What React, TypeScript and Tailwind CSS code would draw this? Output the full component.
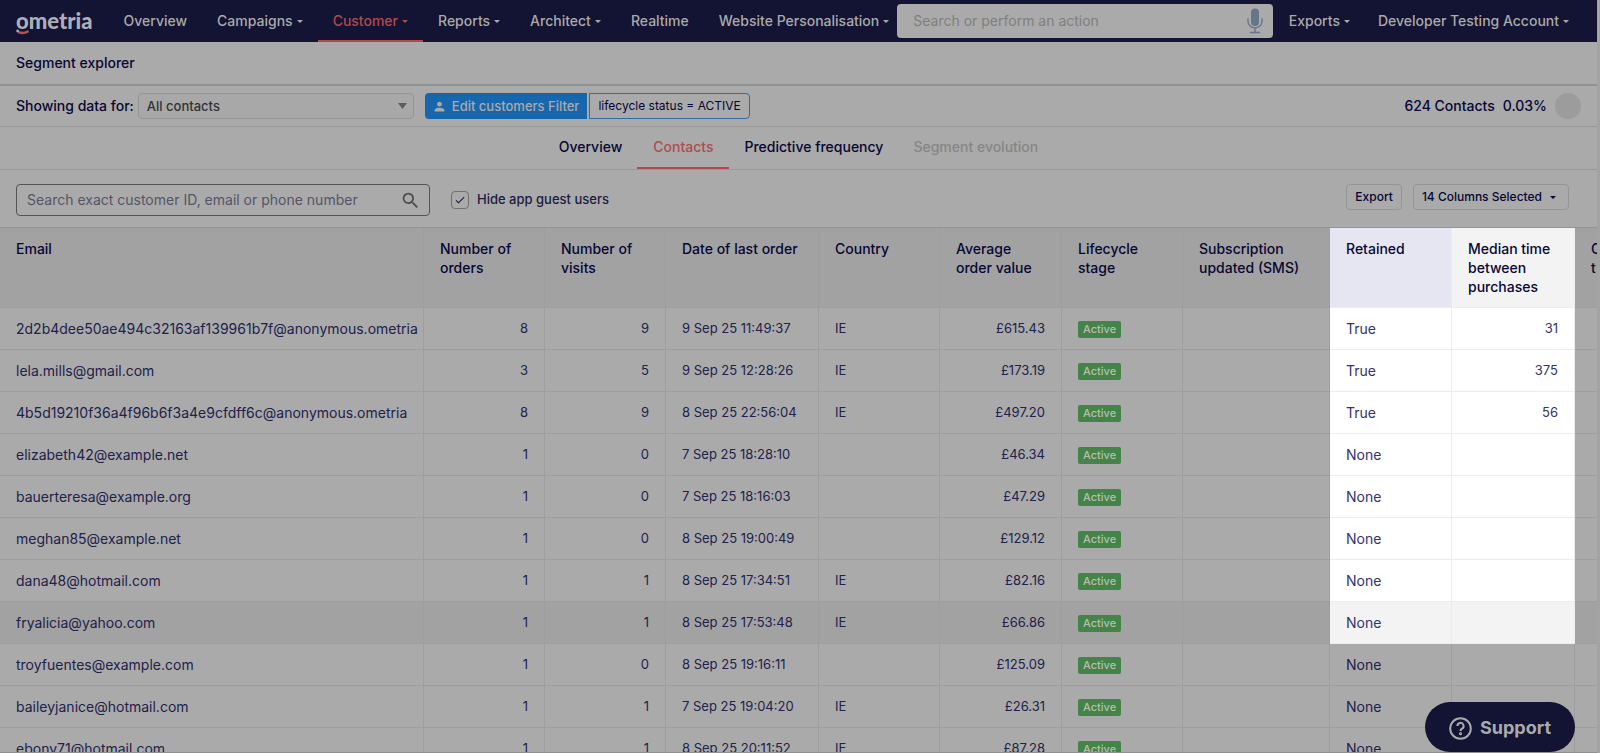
import React, { useState } from 'react'
import { IoMdPerson } from 'react-icons/io'
import { MdSearch, MdCheck } from 'react-icons/md'

type NavItem = {
  label: string;
  caret?: boolean;
  active?: boolean;
};

type Contact = {
  email: string;
  orders: number;
  visits: number;
  date: string;
  country: string;
  value: string;
  retained: string;
  median: string;
};

const navItems: NavItem[] = [
  { label: 'Overview' },
  { label: 'Campaigns', caret: true },
  { label: 'Customer', caret: true, active: true },
  { label: 'Reports', caret: true },
  { label: 'Architect', caret: true },
  { label: 'Realtime' },
  { label: 'Website Personalisation', caret: true },
]

const contacts: Contact[] = [
  { email: '2d2b4dee50ae494c32163af139961b7f@anonymous.ometria', orders: 8, visits: 9, date: '9 Sep 25 11:49:37', country: 'IE', value: '£615.43', retained: 'True', median: '31' },
  { email: 'lela.mills@gmail.com', orders: 3, visits: 5, date: '9 Sep 25 12:28:26', country: 'IE', value: '£173.19', retained: 'True', median: '375' },
  { email: '4b5d19210f36a4f96b6f3a4e9cfdff6c@anonymous.ometria', orders: 8, visits: 9, date: '8 Sep 25 22:56:04', country: 'IE', value: '£497.20', retained: 'True', median: '56' },
  { email: 'elizabeth42@example.net', orders: 1, visits: 0, date: '7 Sep 25 18:28:10', country: '', value: '£46.34', retained: 'None', median: '' },
  { email: 'bauerteresa@example.org', orders: 1, visits: 0, date: '7 Sep 25 18:16:03', country: '', value: '£47.29', retained: 'None', median: '' },
  { email: 'meghan85@example.net', orders: 1, visits: 0, date: '8 Sep 25 19:00:49', country: '', value: '£129.12', retained: 'None', median: '' },
  { email: 'dana48@hotmail.com', orders: 1, visits: 1, date: '8 Sep 25 17:34:51', country: 'IE', value: '£82.16', retained: 'None', median: '' },
  { email: 'fryalicia@yahoo.com', orders: 1, visits: 1, date: '8 Sep 25 17:53:48', country: 'IE', value: '£66.86', retained: 'None', median: '' },
  { email: 'troyfuentes@example.com', orders: 1, visits: 0, date: '8 Sep 25 19:16:11', country: '', value: '£125.09', retained: 'None', median: '' },
  { email: 'baileyjanice@hotmail.com', orders: 1, visits: 1, date: '7 Sep 25 19:04:20', country: 'IE', value: '£26.31', retained: 'None', median: '' },
  { email: 'ebony71@hotmail.com', orders: 1, visits: 1, date: '8 Sep 25 20:11:52', country: 'IE', value: '£87.28', retained: 'None', median: '' },
]

// rows inside the spotlight, and the row under the pointer
const SPOTLIGHT_ROWS = 8
const HOVERED_ROW = 7

const Caret = () => (
  <svg width="6" height="3" viewBox="0 0 6 3" className="shrink-0" aria-hidden="true">
    <path d="M0 0h6L3 3z" fill="currentColor" />
  </svg>
)

const Logo = () => (
  <a href="#home" className="relative block shrink-0 font-['Lato',sans-serif] text-[22px] leading-6 font-black text-[#aeaeb6]">
    ometria
    <svg width="14" height="6" viewBox="0 0 14 6" className="absolute left-0 top-5" aria-hidden="true">
      <path d="M3 3.2C6 4.4 9 4 11.6 2.6" stroke="#b84f55" strokeWidth="2.6" fill="none" strokeLinecap="round" />
      <circle cx="1.6" cy="2" r="1.4" fill="#aaaaaa" />
    </svg>
  </a>
)

const MicIcon = () => (
  <svg width="16" height="26" viewBox="0 0 16 26" aria-hidden="true">
    <rect x="4" y="0.5" width="8" height="17.5" rx="4" fill="#66768a" />
    <path d="M1 11v2.5a7 6.5 0 0 0 14 0V11M8 20v4.5M3.5 24.5h9" stroke="#66768a" strokeWidth="1.4" fill="none" strokeLinecap="round" />
  </svg>
)

const TopNav = () => (
  <nav className="flex h-[42px] items-center bg-[#131333] pl-4 text-sm font-medium text-[#aaaaaa]">
    <Logo />
    <div className="ml-4 flex h-full">
      {navItems.map(item => (
        <a
          key={item.label}
          href={'#' + item.label.toLowerCase().replace(' ', '-')}
          className={`flex items-center gap-1 whitespace-nowrap px-[15px] pt-0.5 border-b-2 last:pr-2 ${item.active ? 'border-[#b04a4f] text-[#b04a4f]' : 'border-transparent'}`}
        >
          {item.label}
          {item.caret && <Caret />}
        </a>
      ))}
    </div>
    <div className="flex h-[34px] min-w-0 flex-1 items-center rounded-sm bg-[#aaaaaa] pl-4 pr-2.5">
      <input
        type="text"
        aria-label="Search or perform an action"
        placeholder="Search or perform an action"
        className="min-w-0 flex-1 bg-transparent text-sm font-normal text-[#070741] outline-none placeholder:text-[#808080]"
      />
      <button aria-label="Voice search"><MicIcon /></button>
    </div>
    <a href="#exports" className="ml-4 flex items-center gap-1 whitespace-nowrap">Exports <Caret /></a>
    <a href="#account" className="mx-7 flex items-center gap-1 whitespace-nowrap">Developer Testing Account <Caret /></a>
  </nav>
)

const FilterBar = () => (
  <div className="flex h-[41px] items-center border-b border-[#989898] px-4 text-sm font-medium">
    <label htmlFor="segment">Showing data for:</label>
    <div className="relative ml-1 w-[276px]">
      <select id="segment" className="h-[26px] w-full appearance-none rounded-sm border border-[#959595] bg-[#a8a8a8] px-2 text-[13px] text-[#333333]">
        <option>All contacts</option>
      </select>
      <svg width="9" height="6" viewBox="0 0 9 6" className="pointer-events-none absolute right-[7px] top-2.5" aria-hidden="true">
        <path d="M0 0h9L4.5 6z" fill="#5c5c5c" />
      </svg>
    </div>
    <button className="ml-[11px] flex h-[26px] items-center gap-1.5 rounded-l-sm bg-[#1867ad] px-2 text-[13px] font-medium text-[#aaaaaa]">
      <IoMdPerson size={13} /> Edit customers Filter
    </button>
    <button className="ml-0.5 h-[26px] rounded-r-sm border border-[#2a6cad] px-2 text-xs font-normal">lifecycle status = ACTIVE</button>
    <span className="ml-auto">624 Contacts</span>
    <span className="ml-2">0.03%</span>
    <span className="ml-2 size-[26px] rounded-full bg-[#9c9c9c]" />
  </div>
)

const Tabs = () => (
  <div className="flex h-[43px] justify-center border-b border-[#989898] text-sm font-medium">
    <button className="px-[15px] pb-0.5">Overview</button>
    <button className="border-b-2 border-[#b04a4f] px-4 text-[#b04a4f]">Contacts</button>
    <button className="px-[15px] pb-0.5">Predictive frequency</button>
    <button className="px-[15px] pb-0.5 text-[#868686]" disabled>Segment evolution</button>
  </div>
)

const Toolbar = () => {
  const [hideGuests, setHideGuests] = useState(true)

  return (
    <div className="flex h-[58px] items-start border-b border-[#959595] pt-3.5 pl-4 pr-7 text-xs font-medium">
      <div className="flex h-8 w-[414px] items-center rounded-sm border border-[#555555] pl-2.5 pr-2">
        <input
          type="text"
          aria-label="Search exact customer ID, email or phone number"
          placeholder="Search exact customer ID, email or phone number"
          className="min-w-0 flex-1 bg-transparent text-sm font-normal text-[#070741] outline-none placeholder:text-[#555568]"
        />
        <MdSearch size={21} className="text-[#4c4c4c]" />
      </div>
      <label className="relative ml-[21px] flex h-8 items-center gap-2 text-[13px] text-[#1b1b42]">
        <input
          type="checkbox"
          checked={hideGuests}
          onChange={e => setHideGuests(e.target.checked)}
          className="size-[18px] appearance-none rounded-sm border border-[#707070]"
        />
        {hideGuests && <MdCheck size={12} className="pointer-events-none absolute left-[3px]" />}
        Hide app guest users
      </label>
      <button className="ml-auto h-[26px] rounded-sm border border-[#959595] px-2">Export</button>
      <button className="ml-[11px] flex h-[26px] items-center gap-2 rounded-sm border border-[#959595] pl-2 pr-3">
        14 Columns Selected <Caret />
      </button>
    </div>
  )
}

const ContactsTable = () => {
  const head = 'border-r border-b px-4 py-[11px] align-top text-left font-medium'
  const th = `${head} border-[#9e9e9e] bg-[#a2a2a2]`
  const td = 'h-[42px] border-r border-b border-[#9e9e9e] px-4 py-0 whitespace-nowrap'

  return (
    <table className="w-full table-fixed border-separate border-spacing-0 text-[13px] leading-[19px]">
      <colgroup>
        <col />
        <col className="w-[121px]" />
        <col className="w-[121px]" />
        <col className="w-[153px]" />
        <col className="w-[121px]" />
        <col className="w-[122px]" />
        <col className="w-[121px]" />
        <col className="w-[147px]" />
        <col className="w-[122px]" />
        <col className="w-[123px]" />
        <col className="w-[22px]" />
      </colgroup>
      <thead className="text-sm leading-[19px]">
        <tr className="h-20">
          <th className={th}>Email</th>
          <th className={th}>Number of orders</th>
          <th className={th}>Number of visits</th>
          <th className={`${th} whitespace-nowrap`}>Date of last order</th>
          <th className={th}>Country</th>
          <th className={th}>Average order value</th>
          <th className={th}>Lifecycle stage</th>
          <th className={th}>Subscription updated (SMS)</th>
          <th className={`${head} border-[#ececf0] bg-[#e6e6f3]`}>Retained</th>
          <th className={`${head} border-[#ececec] bg-[#f3f3f3]`}>Median time between purchases</th>
          <th className="overflow-hidden border-b border-[#9e9e9e] bg-[#a2a2a2] py-[11px] pl-4 text-left align-top font-medium">C<br />t</th>
        </tr>
      </thead>
      <tbody className="text-[#21214b]">
        {contacts.map((c, idx) => {
          const lit = idx < SPOTLIGHT_ROWS
          const hovered = idx === HOVERED_ROW
          const litBg = hovered ? 'bg-[#f3f3f3]' : 'bg-white'
          const litCell = `h-[42px] border-r border-b px-4 py-0 ${lit ? `border-[#ececec] text-[#33336a] ${litBg}` : 'border-[#9e9e9e]'}`
          return (
            <tr key={c.email} className={hovered ? 'bg-[#a2a2a2]' : ''}>
              <td className="h-[42px] border-r border-b border-[#9e9e9e] py-0 pl-4 text-sm whitespace-nowrap">{c.email}</td>
              <td className={`${td} text-right`}>{c.orders}</td>
              <td className={`${td} text-right`}>{c.visits}</td>
              <td className={td}>{c.date}</td>
              <td className={td}>{c.country}</td>
              <td className={`${td} text-right`}>{c.value}</td>
              <td className={td}>
                <span className="inline-block rounded-xs bg-[#448448] px-[5px] text-[11px] leading-[17px] font-medium text-[#b4bfb4]">Active</span>
              </td>
              <td className={td} />
              <td className={`${litCell} text-sm`}>{c.retained}</td>
              <td className={`${litCell} text-right`}>{c.median}</td>
              <td className="border-b border-[#9e9e9e]" />
            </tr>
          )
        })}
      </tbody>
    </table>
  )
}

const SupportButton = () => (
  <button className="fixed right-[25px] bottom-px flex h-[50px] items-center gap-2 rounded-full bg-[#131333] px-6 pt-0.5 text-lg font-bold text-[#aaaaaa]">
    <svg width="23" height="23" viewBox="0 0 23 23" fill="none" stroke="currentColor" strokeWidth="2" aria-hidden="true">
      <circle cx="11.5" cy="11.5" r="10.3" />
      <path d="M8.4 9a3.1 3.1 0 1 1 4.6 2.7c-1 .6-1.5 1.1-1.5 2.2" />
      <circle cx="11.5" cy="16.7" r="0.6" />
    </svg>
    Support
  </button>
)

const App = () => {
  return (
    <div className="h-screen overflow-hidden bg-[#a3a3a3] pr-[3px] font-['Inter',sans-serif] text-[#070733]">
      <main className="h-full overflow-hidden border-b border-[#8f8f8f] bg-[#aaaaaa]">
        <TopNav />
        <header className="flex h-11 items-center border-b-2 border-[#8d9296] px-4">
          <h1 className="text-sm font-medium">Segment explorer</h1>
        </header>
        <FilterBar />
        <Tabs />
        <Toolbar />
        <ContactsTable />
      </main>
      <SupportButton />
    </div>
  )
}

export default App
